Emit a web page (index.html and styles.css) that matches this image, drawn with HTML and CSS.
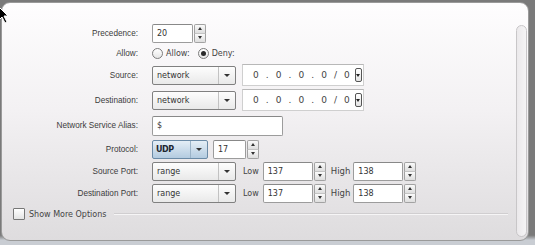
FILE: index.html
```html
<!DOCTYPE html>
<html lang="en">
<head>
  <meta charset="UTF-8">
  <title>Firewall Rule</title>
  <link rel="stylesheet" href="styles.css">
</head>
<body>

<svg class="cursor" width="12" height="18" viewBox="0 0 12 18">
  <path d="M1 1 L1 14 L4 11 L7 17 L9 16 L6 10 L10 10 Z" fill="#000" stroke="#fff" stroke-width="1"/>
</svg>

<div class="panel">
  <div class="form">
    <div class="rows">
      <label class="label">Precedence:</label>
      <div class="field">
        <div class="spin">
          <input class="box w-prec" type="text" value="20">
          <div class="arrows"><span class="up"></span><span class="down"></span></div>
        </div>
      </div>

      <label class="label">Allow:</label>
      <div class="field">
        <span class="radio"></span><span class="opt">Allow:</span>
        <span class="radio checked"></span><span class="opt">Deny:</span>
      </div>

      <label class="label">Source:</label>
      <div class="field">
        <div class="select w-type"><span class="value">network</span><span class="drop"></span></div>
        <div class="ip">0 . 0 . 0 . 0 / 0<span class="ip-btn"></span></div>
      </div>

      <label class="label">Destination:</label>
      <div class="field">
        <div class="select w-type"><span class="value">network</span><span class="drop"></span></div>
        <div class="ip">0 . 0 . 0 . 0 / 0<span class="ip-btn"></span></div>
      </div>

      <label class="label">Network Service Alias:</label>
      <div class="field">
        <input class="box w-alias" type="text" value="$">
      </div>

      <label class="label">Protocol:</label>
      <div class="field">
        <div class="select blue w-proto"><span class="value">UDP</span><span class="drop"></span></div>
        <div class="spin">
          <input class="box w-num" type="text" value="17">
          <div class="arrows"><span class="up"></span><span class="down"></span></div>
        </div>
      </div>

      <label class="label">Source Port:</label>
      <div class="field">
        <div class="select w-type"><span class="value">range</span><span class="drop"></span></div>
        <span class="bound low">Low</span>
        <div class="spin">
          <input class="box w-port" type="text" value="137">
          <div class="arrows"><span class="up"></span><span class="down"></span></div>
        </div>
        <span class="bound high">High</span>
        <div class="spin">
          <input class="box w-port" type="text" value="138">
          <div class="arrows"><span class="up"></span><span class="down"></span></div>
        </div>
      </div>

      <label class="label">Destination Port:</label>
      <div class="field">
        <div class="select w-type"><span class="value">range</span><span class="drop"></span></div>
        <span class="bound low">Low</span>
        <div class="spin">
          <input class="box w-port" type="text" value="137">
          <div class="arrows"><span class="up"></span><span class="down"></span></div>
        </div>
        <span class="bound high">High</span>
        <div class="spin">
          <input class="box w-port" type="text" value="138">
          <div class="arrows"><span class="up"></span><span class="down"></span></div>
        </div>
      </div>
    </div>

    <div class="more">
      <span class="check"></span>
      <span class="more-text">Show More Options</span>
      <span class="rule"></span>
    </div>
  </div>

  <div class="scrollbar"></div>
</div>

</body>
</html>
```

FILE: styles.css
```css
body {
  margin: 0;
  width: 535px;
  height: 245px;
  overflow: hidden;
  background: linear-gradient(#7a7a7a, #7a7a7a 96%, #c9cdd3 98%);
  font-family: "DejaVu Sans", sans-serif;
  font-size: 8px;
  color: #3a3a3a;
}

.cursor {
  position: absolute;
  left: -2px;
  top: 6px;
}

.panel {
  display: flex;
  height: 237px;
  margin: 2px 6px 0 1px;
  border: 1px solid #9a9a9a;
  border-radius: 9px;
  background: linear-gradient(#fefdfe, #f3f1f3 45%, #dedcde);
}

.form {
  flex: 1;
  padding-top: 20px;
}

.rows {
  display: grid;
  grid-template-columns: 136px auto;
  grid-template-rows: 20px 20px 24px 26px 25px 22px 22px 22px;
  column-gap: 14px;
}

.label {
  display: flex;
  align-items: center;
  justify-content: flex-end;
  font-family: "Liberation Sans", sans-serif;
  font-size: 8.2px;
  color: #3c3c3c;
}

.field {
  display: flex;
  align-items: center;
}

.opt {
  margin: 0 4px 0 3px;
  color: #444;
}

.bound {
  color: #444;
}

.bound.low { margin: 0 4px 0 7px; }
.bound.high { margin: 0 3px 0 5px; font-size: 8.5px; }

/* text boxes and spinners */
.spin {
  display: flex;
  height: 19px;
}

.box {
  box-sizing: border-box;
  height: 19px;
  margin: 0;
  padding: 0 4px;
  border: 1px solid #9c9c9c;
  border-top-color: #888;
  border-radius: 2px;
  background: #fff;
  font-family: "DejaVu Sans", sans-serif;
  font-size: 8px;
  color: #333;
  outline: none;
}

.w-prec { width: 41px; }
.w-num { width: 33px; }
.w-port { width: 50px; }
.w-alias { width: 131px; height: 20px; }

.arrows {
  display: flex;
  flex-direction: column;
  width: 12px;
  margin-left: 1px;
}

.arrows span {
  flex: 1;
  display: flex;
  align-items: center;
  justify-content: center;
  border: 1px solid #a2a2a2;
  border-radius: 2px;
  background: linear-gradient(#fafafa, #dedede);
}

.arrows .up { border-bottom-color: #c4c4c4; border-radius: 2px 2px 0 0; }
.arrows .down { border-top: none; border-radius: 0 0 2px 2px; }

.arrows .up::after,
.arrows .down::after {
  content: "";
  border-left: 2.5px solid transparent;
  border-right: 2.5px solid transparent;
}

.arrows .up::after { border-bottom: 3px solid #333; }
.arrows .down::after { border-top: 3px solid #333; }

/* drop-down selects */
.select {
  box-sizing: border-box;
  display: flex;
  height: 19px;
  border: 1px solid #808080;
  border-radius: 2px;
  background: linear-gradient(#fdfdfd, #e9e9e9);
}

.select .value {
  flex: 1;
  display: flex;
  align-items: center;
  padding-left: 4px;
  color: #333;
}

.select .drop {
  width: 16px;
  display: flex;
  align-items: center;
  justify-content: center;
  border-left: 1px solid #c2c2c2;
}

.select .drop::after {
  content: "";
  border-left: 3px solid transparent;
  border-right: 3px solid transparent;
  border-top: 3px solid #333;
}

.select.blue {
  border-color: #6a8aa6;
  background: linear-gradient(#e4eef6, #b3cbe0);
}

.select.blue .value {
  padding-left: 3px;
  color: #1d2630;
  font-weight: bold;
  letter-spacing: -0.4px;
}

.select.blue .drop {
  border-left-color: #9ab3c8;
}

.w-type { width: 84px; }
.w-proto { width: 56px; margin-right: 5px; }

/* address field */
.ip {
  box-sizing: border-box;
  display: flex;
  align-items: center;
  width: 122px;
  height: 22px;
  margin-left: 6px;
  padding-left: 10px;
  border: 1px solid #cfcfcf;
  border-top-color: #b8b8b8;
  background: #fff;
  font-size: 9px;
  word-spacing: 4.2px;
  color: #444;
  white-space: pre;
}

.ip-btn {
  display: flex;
  align-items: center;
  justify-content: center;
  box-sizing: border-box;
  width: 7px;
  height: 14px;
  margin-left: 5px;
  border: 1px solid #555;
  border-radius: 2px;
  background: linear-gradient(#fff, #e4e4e4);
}

.ip-btn::after {
  content: "";
  border-left: 2px solid transparent;
  border-right: 2px solid transparent;
  border-top: 3px solid #222;
}

/* radio buttons */
.radio {
  box-sizing: border-box;
  display: flex;
  align-items: center;
  justify-content: center;
  width: 11px;
  height: 11px;
  margin-left: 4px;
  border: 1px solid #7c7c7c;
  border-radius: 50%;
  background: linear-gradient(#fff, #e6e6e6);
}

.radio:first-child { margin-left: 0; }

.radio.checked::after {
  content: "";
  width: 5px;
  height: 5px;
  border-radius: 50%;
  background: #2a2a2a;
}

/* bottom options row */
.more {
  display: flex;
  align-items: center;
  height: 18px;
  margin-top: 1px;
  padding-left: 11px;
}

.check {
  box-sizing: border-box;
  width: 12px;
  height: 12px;
  border: 1px solid #777;
  border-radius: 1px;
  background: linear-gradient(#fff, #e4e4e4);
}

.more-text {
  margin-left: 4px;
  color: #444;
}

.rule {
  flex: 1;
  height: 0;
  margin: 0 8px 0 8px;
  border-top: 1px solid #d0ced0;
  border-bottom: 1px solid #f6f5f6;
}

.scrollbar {
  box-sizing: border-box;
  width: 11px;
  margin: 22px 1px 3px 0;
  border: 1px solid #c8c6c8;
  border-radius: 6px;
  background: linear-gradient(90deg, #ebe9eb, #f5f4f5);
}
```
